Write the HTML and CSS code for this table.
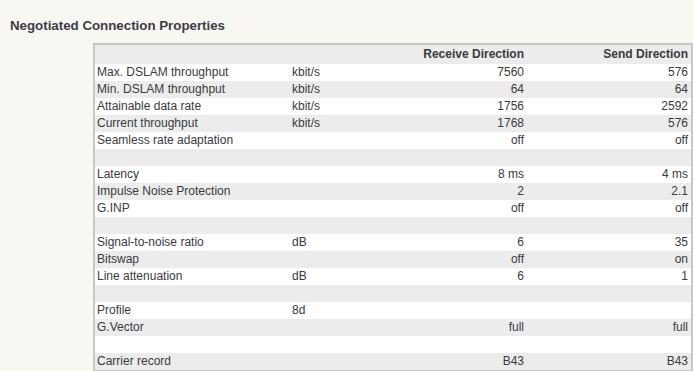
FILE: index.html
```html
<!DOCTYPE html>
<html>
<head>
<meta charset="utf-8">
<link rel="stylesheet" href="styles.css">
</head>
<body>
<h2 class="title">Negotiated Connection Properties</h2>
<div class="wrap">
<table class="props">
<thead>
<tr><th class="lbl"></th><th class="unit"></th><th class="rx">Receive Direction</th><th class="tx">Send Direction</th></tr>
</thead>
<tbody>
<tr><td>Max. DSLAM throughput</td><td>kbit/s</td><td class="num">7560</td><td class="num">576</td></tr>
<tr><td>Min. DSLAM throughput</td><td>kbit/s</td><td class="num">64</td><td class="num">64</td></tr>
<tr><td>Attainable data rate</td><td>kbit/s</td><td class="num">1756</td><td class="num">2592</td></tr>
<tr><td>Current throughput</td><td>kbit/s</td><td class="num">1768</td><td class="num">576</td></tr>
<tr><td>Seamless rate adaptation</td><td></td><td class="num">off</td><td class="num">off</td></tr>
<tr class="gap"><td></td><td></td><td></td><td></td></tr>
<tr><td>Latency</td><td></td><td class="num">8 ms</td><td class="num">4 ms</td></tr>
<tr><td>Impulse Noise Protection</td><td></td><td class="num">2</td><td class="num">2.1</td></tr>
<tr><td>G.INP</td><td></td><td class="num">off</td><td class="num">off</td></tr>
<tr class="gap"><td></td><td></td><td></td><td></td></tr>
<tr><td>Signal-to-noise ratio</td><td>dB</td><td class="num">6</td><td class="num">35</td></tr>
<tr><td>Bitswap</td><td></td><td class="num">off</td><td class="num">on</td></tr>
<tr><td>Line attenuation</td><td>dB</td><td class="num">6</td><td class="num">1</td></tr>
<tr class="gap"><td></td><td></td><td></td><td></td></tr>
<tr><td>Profile</td><td>8d</td><td class="num"></td><td class="num"></td></tr>
<tr><td>G.Vector</td><td></td><td class="num">full</td><td class="num">full</td></tr>
<tr class="gap"><td></td><td></td><td></td><td></td></tr>
<tr><td>Carrier record</td><td></td><td class="num">B43</td><td class="num">B43</td></tr>
</tbody>
</table>
</div>
</body>
</html>
```
FILE: styles.css
```css
html, body {
  margin: 0;
  padding: 0;
  background: #f8f7f2;
  font-family: "Liberation Sans", Arial, sans-serif;
  color: #333333;
}
.title {
  margin: 0;
  padding: 18px 0 0 10px;
  height: 25px;
  font-size: 13.3px;
  font-weight: bold;
  color: #3c3c46;
  line-height: 16px;
}
.wrap {
  padding-left: 93px;
}
.props {
  border-collapse: collapse;
  border: 2px solid #c8c8c0;
  width: 600px;
  font-size: 12px;
  line-height: 17px;
}
.props th {
  background: #ececec;
  font-weight: bold;
  height: 19px;
  padding: 0 3px 0 2px;
  text-align: right;
  color: #3a3a40;
}
.props td {
  height: 17px;
  padding: 0 3px 0 2px;
  white-space: nowrap;
  color: #3a3a40;
}
.props th.lbl { width: 190px; }
.props th.unit { width: 60px; }
.props th.rx { width: 167px; }
.props tbody tr:nth-child(odd) { background: #ffffff; }
.props tbody tr:nth-child(even) { background: #ececec; }
.props td.num { text-align: right; }
```
